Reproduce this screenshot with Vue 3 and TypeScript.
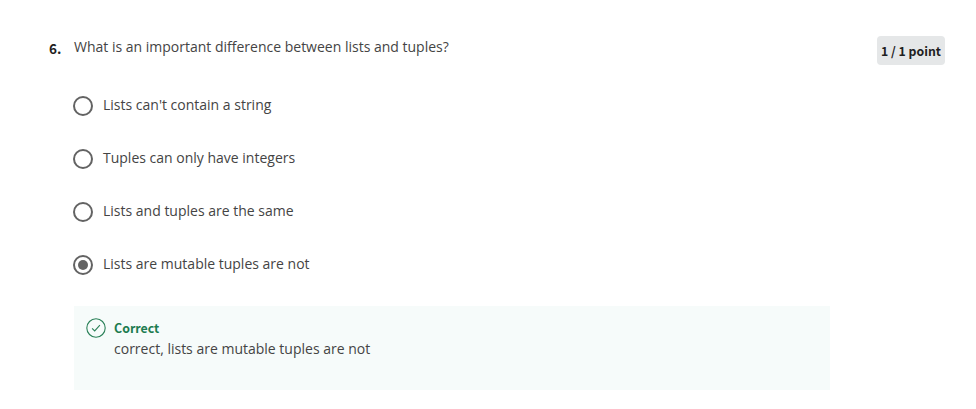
<script setup lang="ts">
import { ref } from 'vue'

const options: string[] = [
  "Lists can't contain a string",
  'Tuples can only have integers',
  'Lists and tuples are the same',
  'Lists are mutable tuples are not',
]
const selected = ref(3)
</script>

<template>
  <main class="question">
    <div class="number">6.</div>
    <section class="body">
      <h2 class="prompt">What is an important difference between lists and tuples?</h2>
      <ul class="options">
        <li v-for="(option, i) in options" :key="option" class="option" @click="selected = i">
          <span class="radio" :class="{ checked: selected === i }"></span>
          <span class="label">{{ option }}</span>
        </li>
      </ul>
      <div class="feedback">
        <svg class="check" viewBox="0 0 20 20" width="20" height="20">
          <circle cx="10" cy="10" r="9.2" />
          <path d="M6.1 10.3 8.7 12.9 13.9 7.2" />
        </svg>
        <div>
          <div class="verdict">Correct</div>
          <div class="explanation">correct, lists are mutable tuples are not</div>
        </div>
      </div>
    </section>
    <div class="points">1 / 1 point</div>
  </main>
</template>

<style>
body {
  background: #fff;
}
</style>

<style scoped>
.question {
  box-sizing: border-box;
  display: flex;
  align-items: flex-start;
  height: 409px;
  padding: 36px 31px 0 49px;
  font-family: 'Open Sans', sans-serif;
  font-size: 14px;
  line-height: 21px;
  color: #444;
}
.number {
  width: 25px;
  padding-top: 2px;
  font-family: 'Noto Sans CJK SC', 'Noto Sans', sans-serif;
  font-size: 13.5px;
  font-weight: 700;
  color: #1f1f1f;
}
.body {
  width: 756px;
}
.prompt {
  margin: 0;
  font-size: 14px;
  font-weight: 400;
  line-height: 21px;
}
.options {
  display: grid;
  gap: 32px;
  margin: 37px 0 0;
  padding: 0;
  list-style: none;
}
.option {
  display: flex;
  gap: 10px;
  height: 21px;
}
.radio {
  box-sizing: border-box;
  display: grid;
  place-items: center;
  width: 20px;
  height: 20px;
  margin: 2px 0 0 -1px;
  border: 2px solid #636363;
  border-radius: 50%;
}
.radio.checked::after {
  content: '';
  width: 10px;
  height: 10px;
  border-radius: 50%;
  background: #636363;
}
.feedback {
  box-sizing: border-box;
  display: flex;
  gap: 8px;
  height: 84px;
  margin-top: 32px;
  padding: 12px;
  background: #f6fbfa;
}
.check {
  fill: none;
  stroke: #2a8058;
  stroke-width: 1.1;
}
.verdict {
  height: 20px;
  font-family: 'Noto Sans CJK SC', 'Noto Sans', sans-serif;
  font-size: 12.4px;
  font-weight: 700;
  line-height: 21px;
  color: #1d7c50;
}
.points {
  box-sizing: border-box;
  width: 68px;
  height: 29px;
  margin-left: auto;
  border-radius: 4px;
  background: #e5e7e8;
  font-family: 'Noto Sans CJK SC', 'Noto Sans', sans-serif;
  font-size: 12.3px;
  font-weight: 700;
  line-height: 31px;
  color: #1f1f1f;
  text-align: center;
  white-space: nowrap;
}
</style>
